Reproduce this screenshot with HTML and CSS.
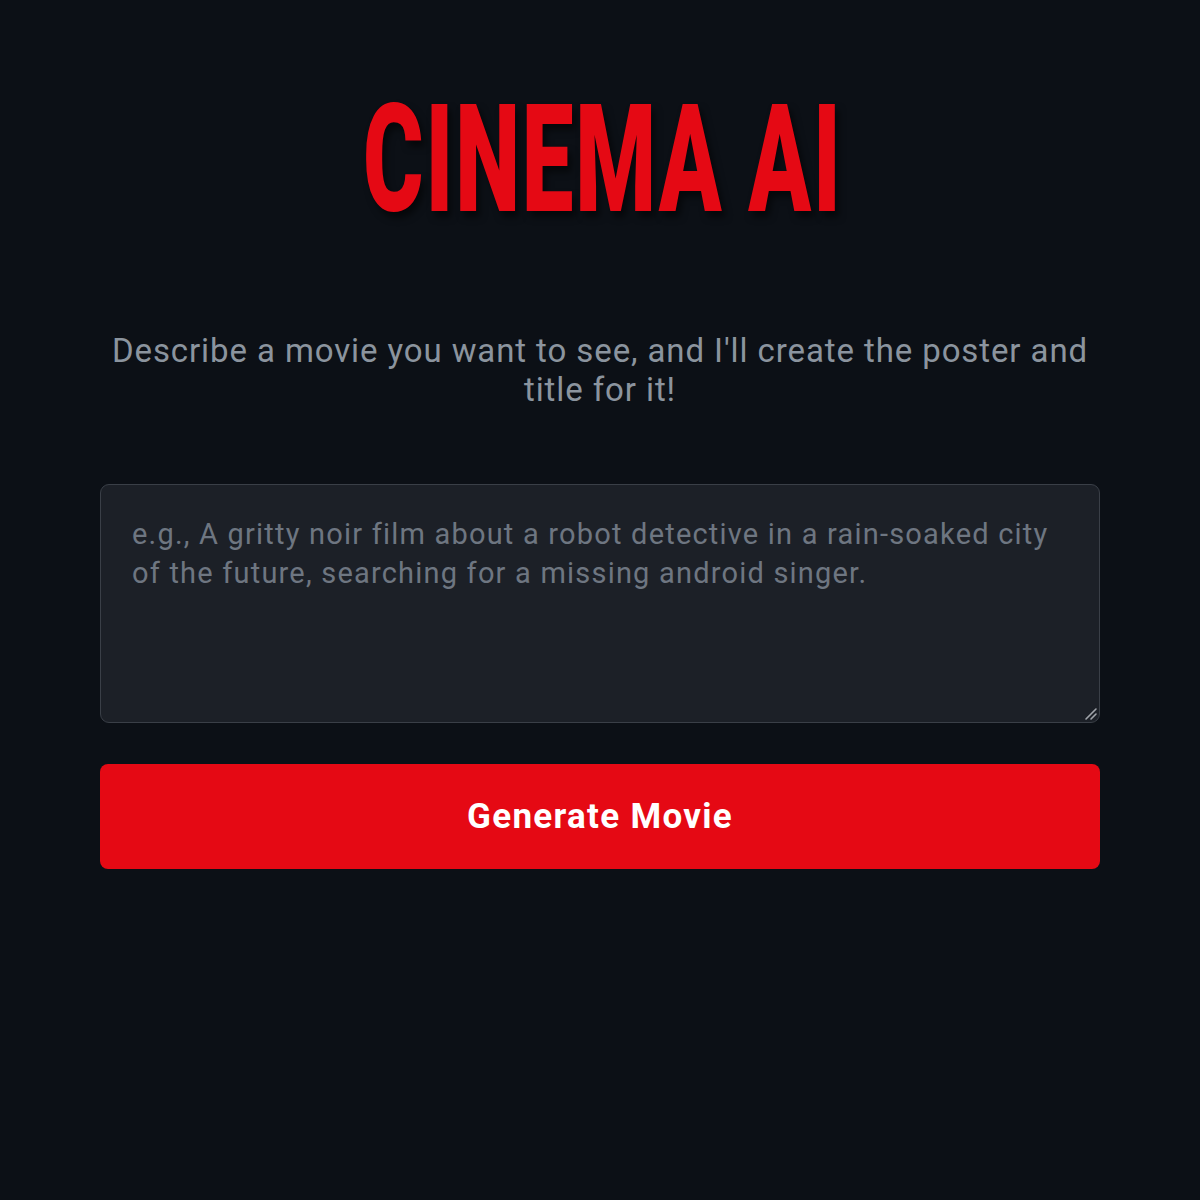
FILE: index.html
```html
<!DOCTYPE html>
<html lang="en">
<head>
<meta charset="utf-8">
<title>Cinema AI</title>
<link rel="stylesheet" href="styles.css">
</head>
<body>
<main class="app">
  <header class="hero">
    <h1 class="logo"><span class="logo-text">CINEMA AI</span></h1>
    <p class="tagline">Describe a movie you want to see, and I'll create the poster and title for it!</p>
  </header>
  <form class="prompt-form">
    <textarea class="prompt" placeholder="e.g., A gritty noir film about a robot detective in a rain-soaked city of the future, searching for a missing android singer."></textarea>
    <button type="button" class="generate">Generate Movie</button>
  </form>
</main>
</body>
</html>
```
FILE: styles.css
```css
* { box-sizing: border-box; }
html, body { margin: 0; padding: 0; }
body {
  background: #0c1016;
  color: #e6edf3;
  font-family: Roboto, "Liberation Sans", sans-serif;
  min-height: 1200px;
}
.app {
  max-width: 1000px;
  margin: 0 auto;
  padding-top: 92px;
  display: flex;
  flex-direction: column;
}
.hero {
  display: flex;
  flex-direction: column;
  align-items: center;
}
.logo {
  margin: 0;
  height: 130px;
  display: flex;
  justify-content: center;
  align-items: center;
  width: 100%;
}
.logo-text {
  display: inline-block;
  font-family: Roboto, "Liberation Sans", sans-serif;
  font-weight: 900;
  font-size: 150px;
  line-height: 130px;
  color: #e50914;
  letter-spacing: 3px;
  transform: translate(3px, 3px) scaleX(0.615);
  text-shadow: 6px 6px 10px rgba(0, 0, 0, 0.55);
  white-space: nowrap;
}
.tagline {
  margin: 109px 0 0;
  font-size: 33px;
  line-height: 39px;
  letter-spacing: 0.9px;
  color: #8b949e;
  text-align: center;
}
.prompt-form {
  margin-top: 75px;
  display: flex;
  flex-direction: column;
  gap: 41px;
}
.prompt {
  display: block;
  width: 100%;
  height: 239px;
  background: #1c2027;
  border: 1px solid #3a3f47;
  border-radius: 9px;
  padding: 30px 31px;
  font-family: Roboto, "Liberation Sans", sans-serif;
  font-size: 29px;
  line-height: 39px;
  letter-spacing: 1.2px;
  color: #e6edf3;
  resize: vertical;
  outline: none;
  color-scheme: dark;
}
.prompt::-webkit-resizer {
  background: transparent url("data:image/svg+xml,%3Csvg xmlns='http://www.w3.org/2000/svg' width='16' height='16'%3E%3Cpath d='M4 14L14 4M9 14L14 9' stroke='%23a0a4aa' stroke-width='1.6' stroke-linecap='round'/%3E%3C/svg%3E") no-repeat right 1px bottom 1px;
}
.prompt::placeholder { color: #6e7681; }
.generate {
  height: 105px;
  border: none;
  border-radius: 8px;
  background: #e50914;
  color: #ffffff;
  font-family: Roboto, "Liberation Sans", sans-serif;
  font-weight: 700;
  font-size: 35px;
  letter-spacing: 1.3px;
  cursor: pointer;
}
```
